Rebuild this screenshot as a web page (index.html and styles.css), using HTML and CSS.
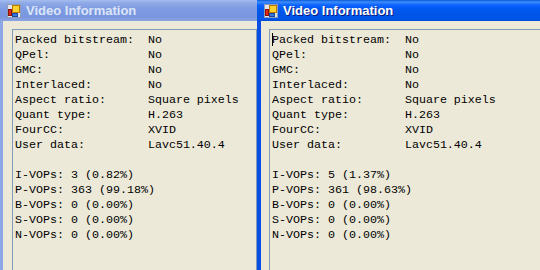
FILE: index.html
```html
<!DOCTYPE html>
<html lang="en">
<head>
  <meta charset="UTF-8" />
  <title>Video Information</title>
  <link rel="stylesheet" href="styles.css">
</head>
<body>
  <div class="desk">
    <div class="win inactive">
      <div class="titlebar">
        <svg class="icon" width="14" height="14" viewBox="0 0 14 14">
          <rect x="0.5" y="0.5" width="13" height="13" fill="#dfe4ee" stroke="#8f9cb8"/>
          <rect x="1.5" y="5.5" width="3" height="6" fill="#e02818" stroke="#8a1408"/>
          <rect x="5.5" y="1.5" width="7" height="7" fill="#ffd230" stroke="#c07a00"/>
          <rect x="5.5" y="9.5" width="5" height="3" fill="#3a78e0" stroke="#1848a0"/>
        </svg>
        <span class="caption">Video Information</span>
      </div>
      <div class="frame">
        <div class="textbox">
<pre>Packed bitstream:  No
QPel:              No
GMC:               No
Interlaced:        No
Aspect ratio:      Square pixels
Quant type:        H.263
FourCC:            XVID
User data:         Lavc51.40.4

I-VOPs: 3 (0.82%)
P-VOPs: 363 (99.18%)
B-VOPs: 0 (0.00%)
S-VOPs: 0 (0.00%)
N-VOPs: 0 (0.00%)</pre>
        </div>
      </div>
    </div>

    <div class="win active">
      <div class="titlebar">
        <svg class="icon" width="14" height="14" viewBox="0 0 14 14">
          <rect x="0.5" y="0.5" width="13" height="13" fill="#dfe4ee" stroke="#8f9cb8"/>
          <rect x="1.5" y="5.5" width="3" height="6" fill="#e02818" stroke="#8a1408"/>
          <rect x="5.5" y="1.5" width="7" height="7" fill="#ffd230" stroke="#c07a00"/>
          <rect x="5.5" y="9.5" width="5" height="3" fill="#3a78e0" stroke="#1848a0"/>
        </svg>
        <span class="caption">Video Information</span>
      </div>
      <div class="frame">
        <div class="textbox">
<pre><span class="caret"></span>Packed bitstream:  No
QPel:              No
GMC:               No
Interlaced:        No
Aspect ratio:      Square pixels
Quant type:        H.263
FourCC:            XVID
User data:         Lavc51.40.4

I-VOPs: 5 (1.37%)
P-VOPs: 361 (98.63%)
B-VOPs: 0 (0.00%)
S-VOPs: 0 (0.00%)
N-VOPs: 0 (0.00%)</pre>
        </div>
      </div>
    </div>
  </div>
</body>
</html>
```

FILE: styles.css
```css
body {
  margin: 0;
  padding: 0;
  background-color: #ece9d8;
  overflow: hidden;
}
.desk {
  display: flex;
  height: 270px;
}
.win {
  display: flex;
  flex-direction: column;
  min-width: 0;
}
.win.inactive {
  width: 257px;
}
.win.active {
  flex: 1;
}
.titlebar {
  height: 21px;
  display: flex;
  align-items: center;
  gap: 5px;
  padding-left: 7px;
  flex-shrink: 0;
}
.inactive .titlebar {
  background: linear-gradient(to bottom, #a5bdee 0, #8ea9e6 3px, #7f9be2 9px, #7a96df 17px, #8ba4e2 21px);
}
.active .titlebar {
  background: linear-gradient(to bottom, #0a5ad8 0, #3d8cfa 2px, #0d63ff 5px, #0058f0 9px, #0054e6 16px, #0056ec 19px, #0048d6 21px);
}
.icon {
  flex-shrink: 0;
}
.caption {
  font-family: "Liberation Sans", Arial, sans-serif;
  font-weight: bold;
  font-size: 13px;
  white-space: nowrap;
}
.inactive .caption {
  color: #dbe5f8;
}
.active .caption {
  color: #fff;
  text-shadow: 1px 1px 0 #0a1a80;
}
.frame {
  flex: 1;
  display: flex;
  padding-top: 8px;
}
.inactive .frame {
  border-left: 3px solid #8ca7e6;
  padding-left: 9px;
}
.active .frame {
  border-left: 4px solid #0a4ee4;
  padding-left: 8px;
}
.textbox {
  flex: 1;
  border: 1px solid #7f9db9;
  border-bottom: none;
  background-color: #ece9d8;
  padding: 3px 0 0 2px;
  min-width: 0;
}
.active .textbox {
  border-right: none;
}
.textbox pre {
  margin: 0;
  font-family: "Liberation Mono", "Courier New", monospace;
  font-size: 11.67px;
  line-height: 15px;
  color: #000;
  white-space: pre;
}
.caret {
  display: inline-block;
  width: 0;
  height: 13px;
  border-left: 1px solid #000;
  margin-right: -1px;
  vertical-align: -3px;
}
```
